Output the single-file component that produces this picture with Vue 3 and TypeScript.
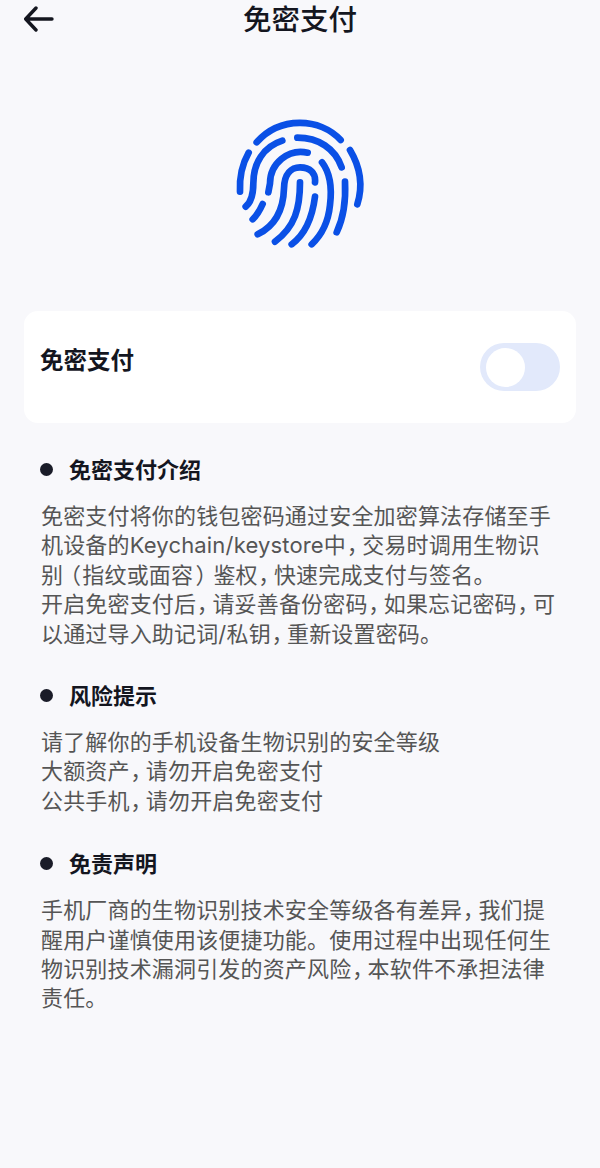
<script setup lang="ts">
const fingerprintPaths = [
  'M110 112C180 33 300 38 362 105',
  'M86 143C65 180 58 220 60 260',
  'M390 135C420 185 430 240 412 298',
  'M187 107C130 125 100 175 100 235C100 265 95 290 77 305',
  'M232 98C295 98 345 130 365 187',
  'M263 143C205 130 150 175 150 235L145 262',
  'M128 297C120 315 110 332 98 343',
  'M113 388C160 365 190 320 192 250C193 205 215 187 240 187C270 187 288 205 285 232',
  'M240 232C240 310 225 365 165 410',
  'M285 275C278 330 260 385 215 418',
  'M306 172C335 210 335 260 330 300C325 350 305 390 275 418',
  'M375 230C378 290 370 340 350 382',
]

const sections = [
  {
    title: '免密支付介绍',
    lines: [
      '免密支付将你的钱包密码通过安全加密算法存储至手',
      '机设备的Keychain/keystore中，交易时调用生物识',
      '别（指纹或面容）鉴权，快速完成支付与签名。',
      '开启免密支付后，请妥善备份密码，如果忘记密码，可',
      '以通过导入助记词/私钥，重新设置密码。',
    ],
  },
  {
    title: '风险提示',
    lines: ['请了解你的手机设备生物识别的安全等级', '大额资产，请勿开启免密支付', '公共手机，请勿开启免密支付'],
  },
  {
    title: '免责声明',
    lines: [
      '手机厂商的生物识别技术安全等级各有差异，我们提',
      '醒用户谨慎使用该便捷功能。使用过程中出现任何生',
      '物识别技术漏洞引发的资产风险，本软件不承担法律',
      '责任。',
    ],
  },
]

// the reference's commas and brackets are narrower than a full CJK cell
const punctClass: Record<string, string> = { '，': 'comma', '（': 'open', '）': 'close' }

function splitLine(line: string) {
  return line.split(/([，（）])/).filter(Boolean)
}
</script>

<template>
  <main class="page">
    <header class="topbar">
      <button type="button" class="back" aria-label="返回">
        <svg width="30" height="26" viewBox="0 0 30 26" fill="none">
          <path d="M12 2L1.7 13L12 24M2 13H28" stroke="#14161f" stroke-width="3.4" stroke-linecap="round" stroke-linejoin="round" />
        </svg>
      </button>
      <h1>免密支付</h1>
    </header>

    <div class="hero">
      <svg width="160" height="155" viewBox="0 0 480 465" fill="none">
        <path
          v-for="d in fingerprintPaths"
          :key="d"
          :d="d"
          stroke="#0a50e6"
          stroke-width="20"
          stroke-linecap="round"
        />
      </svg>
    </div>

    <section class="card">
      <strong>免密支付</strong>
      <span class="switch"><i></i></span>
    </section>

    <section v-for="section in sections" :key="section.title" class="info">
      <h2>{{ section.title }}</h2>
      <p v-for="line in section.lines" :key="line">
        <span v-for="(part, i) in splitLine(line)" :key="i" :class="punctClass[part]">{{ part }}</span>
      </p>
    </section>
  </main>
</template>

<style>
body {
  background: #f8f8fb;
}
</style>

<style scoped>
.page {
  box-sizing: border-box;
  min-height: 1168px;
  padding: 0 24px;
  background: #f8f8fb;
  color: #14161f;
  font-family: Inter, "Noto Sans CJK SC", sans-serif;
}

.topbar {
  position: relative;
  height: 40px;
  display: flex;
  align-items: center;
  justify-content: center;
}

.topbar h1 {
  margin: 0;
  font-size: 28.5px;
  font-weight: 500;
  line-height: 40px;
}

.back {
  position: absolute;
  left: 0;
  top: 6px;
  padding: 0;
  border: 0;
  background: transparent;
  display: flex;
}

.hero {
  display: flex;
  justify-content: center;
  padding: 65px 0 51px;
}

.card {
  display: flex;
  justify-content: space-between;
  align-items: flex-start;
  height: 112px;
  box-sizing: border-box;
  margin-bottom: 3px;
  padding: 32px 16px 0;
  border-radius: 14px;
  background: #fff;
}

.card strong {
  font-size: 23.5px;
  font-weight: 700;
  line-height: 36px;
}

.switch {
  display: block;
  width: 80px;
  height: 48px;
  box-sizing: border-box;
  padding: 5px 6px;
  border-radius: 24px;
  background: #e2e9fb;
}

.switch i {
  display: block;
  width: 39px;
  height: 39px;
  border-radius: 50%;
  background: #fff;
}

.info {
  padding: 0 16px 0 17px;
  margin-top: 30px;
}

.info:last-child {
  margin-top: 31px;
}

.info h2 {
  position: relative;
  margin: 0 0 15px;
  padding-left: 28px;
  font-size: 22px;
  font-weight: 700;
  line-height: 34px;
}

.info h2::before {
  position: absolute;
  left: -1px;
  top: 10px;
  width: 13px;
  height: 13px;
  border-radius: 50%;
  background: #1a1c28;
  content: '';
}

.info p {
  margin: 0;
  color: #555;
  font-size: 22px;
  letter-spacing: 0.17px;
  line-height: 29.4px;
  white-space: nowrap;
}

.comma,
.open,
.close {
  font-feature-settings: "palt";
}

.comma {
  margin-left: 2px;
  margin-right: 3px;
}

.open {
  margin-left: 6px;
  margin-right: 2px;
}

.close {
  margin-left: 3px;
  margin-right: 6px;
}
</style>
